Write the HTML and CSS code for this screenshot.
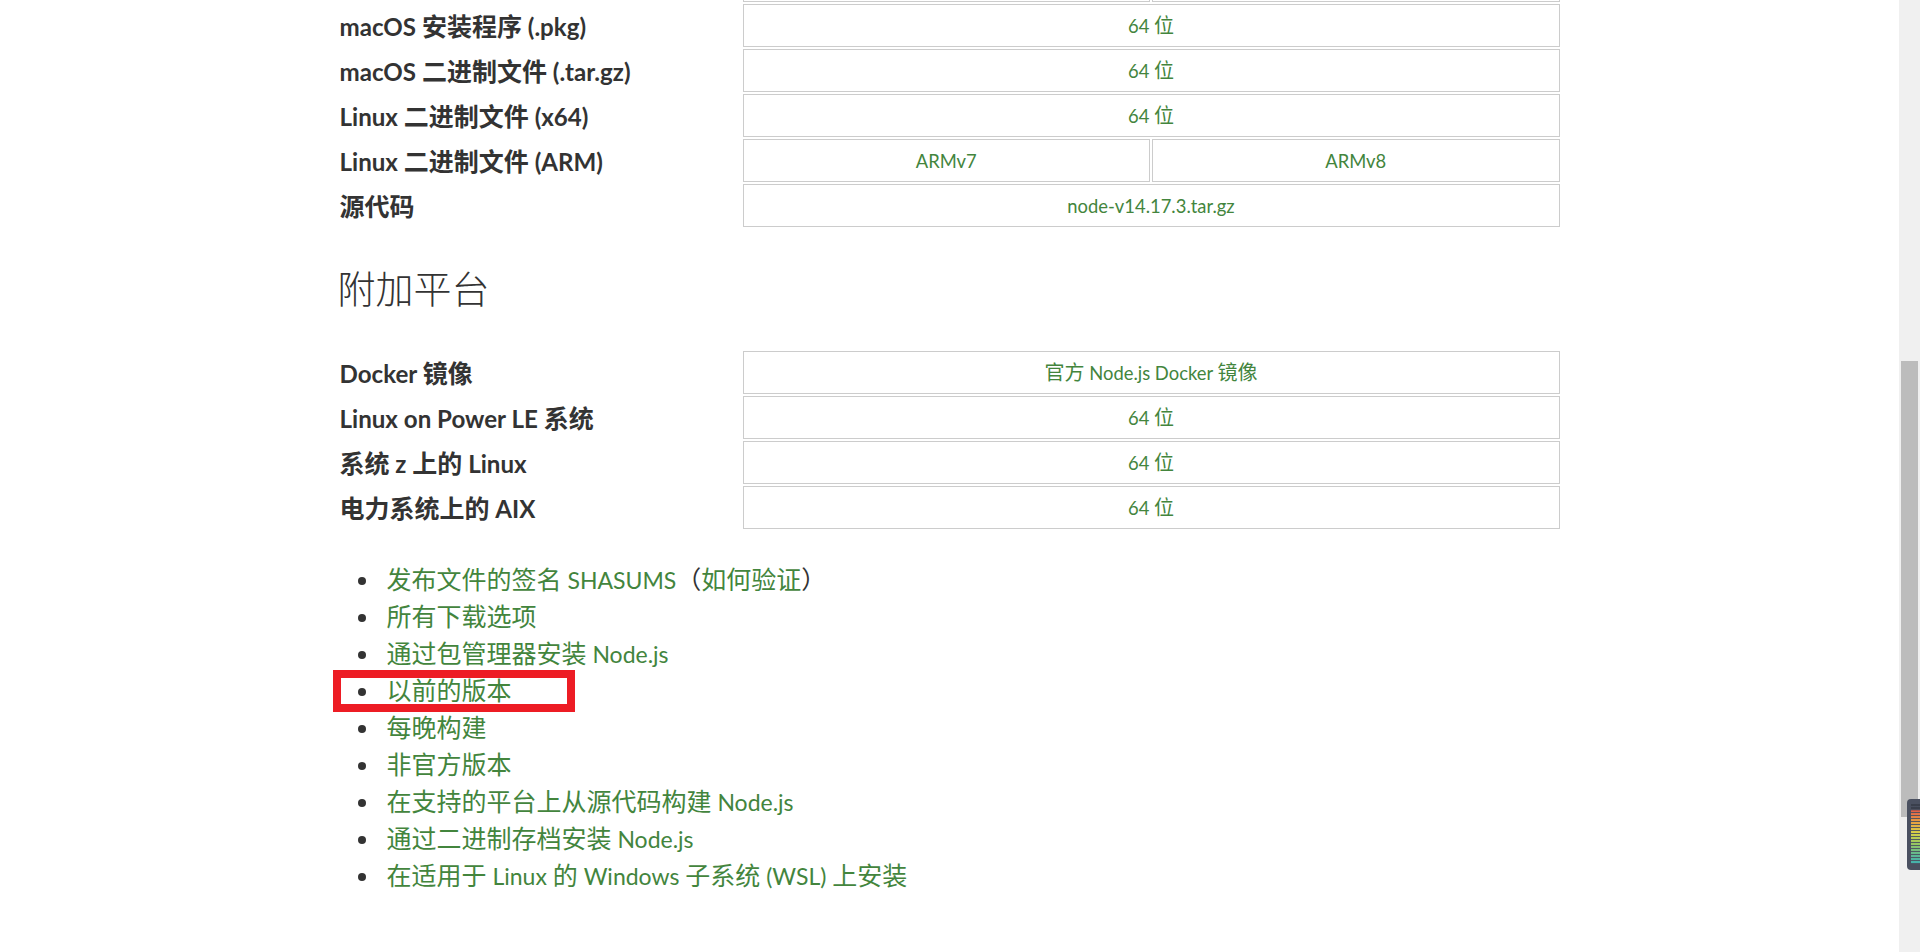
FILE: index.html
```html
<!DOCTYPE html>
<html lang="zh-CN">
<head>
<meta charset="utf-8">
<title>下载 | Node.js</title>
<link rel="stylesheet" href="styles.css">
</head>
<body>
<div class="page">
  <main class="viewport">
    <div class="container">
      <table class="download-matrix matrix-main">
        <colgroup><col class="col-label"><col><col></colgroup>
        <tbody>
          <tr class="offscreen-row"><th></th><td></td><td></td></tr>
          <tr><th><span class="l">macOS </span>安装程序<span class="l"> (.pkg)</span></th><td colspan="2"><a href="#"><span class="l">64 </span>位</a></td></tr>
          <tr><th><span class="l">macOS </span>二进制文件<span class="l"> (.tar.gz)</span></th><td colspan="2"><a href="#"><span class="l">64 </span>位</a></td></tr>
          <tr><th><span class="l">Linux </span>二进制文件<span class="l"> (x64)</span></th><td colspan="2"><a href="#"><span class="l">64 </span>位</a></td></tr>
          <tr><th><span class="l">Linux </span>二进制文件<span class="l"> (ARM)</span></th><td><a href="#"><span class="l">ARMv7</span></a></td><td><a href="#"><span class="l">ARMv8</span></a></td></tr>
          <tr><th>源代码</th><td colspan="2"><a href="#"><span class="l">node-v14.17.3.tar.gz</span></a></td></tr>
        </tbody>
      </table>

      <h2 class="section-title">附加平台</h2>

      <table class="download-matrix">
        <colgroup><col class="col-label"><col><col></colgroup>
        <tbody>
          <tr><th><span class="l">Docker </span>镜像</th><td colspan="2"><a href="#">官方<span class="l"> Node.js Docker </span>镜像</a></td></tr>
          <tr><th><span class="l">Linux on Power LE </span>系统</th><td colspan="2"><a href="#"><span class="l">64 </span>位</a></td></tr>
          <tr><th>系统<span class="l"> z </span>上的<span class="l"> Linux</span></th><td colspan="2"><a href="#"><span class="l">64 </span>位</a></td></tr>
          <tr><th>电力系统上的<span class="l"> AIX</span></th><td colspan="2"><a href="#"><span class="l">64 </span>位</a></td></tr>
        </tbody>
      </table>

      <ul class="link-list">
        <li><span><a href="#">发布文件的签名<span class="l"> SHASUMS</span></a>（<a href="#">如何验证</a>）</span></li>
        <li><span><a href="#">所有下载选项</a></span></li>
        <li><span><a href="#">通过包管理器安装<span class="l"> Node.js</span></a></span></li>
        <li><span><a href="#">以前的版本</a></span></li>
        <li><span><a href="#">每晚构建</a></span></li>
        <li><span><a href="#">非官方版本</a></span></li>
        <li><span><a href="#">在支持的平台上从源代码构建<span class="l"> Node.js</span></a></span></li>
        <li><span><a href="#">通过二进制存档安装<span class="l"> Node.js</span></a></span></li>
        <li><span><a href="#">在适用于<span class="l"> Linux </span>的<span class="l"> Windows </span>子系统<span class="l"> (WSL) </span>上安装</a></span></li>
      </ul>
    </div>
  </main>
  <div class="scrollbar"><div class="scroll-thumb"></div></div>
</div>
<div class="annotation-box"></div>
<div class="meter-widget"><div class="meter-bars"></div></div>
</body>
</html>
```

FILE: styles.css
```css
html, body {
  margin: 0;
  padding: 0;
  height: 100%;
  overflow: hidden;
  background: #ffffff;
}

body {
  font-family: Lato, "Noto Sans CJK SC", sans-serif;
  color: #333333;
}

.l {
  font-size: 0.92em;
  line-height: 1;
}

.page {
  display: flex;
  height: 952px;
}

.viewport {
  flex: 1;
  min-width: 0;
  overflow: hidden;
}

.container {
  width: 1224px;
  margin: -43px auto 0;
}

a {
  color: #43853d;
  text-decoration: none;
}

.download-matrix {
  width: 100%;
  table-layout: fixed;
  border-collapse: separate;
  border-spacing: 2px;
}

.col-label {
  width: 401px;
}

.download-matrix th {
  text-align: left;
  font-size: 25px;
  font-weight: 700;
  line-height: 30px;
  color: #333333;
  padding: 0;
  height: 43px;
  white-space: nowrap;
}

.download-matrix th .l {
  font-size: 0.965em;
}

.download-matrix td {
  border: 1px solid #cccccc;
  height: 41px;
  padding: 0;
  text-align: center;
  font-size: 20px;
  line-height: 41px;
}

.section-title {
  font-family: "Noto Sans CJK SC", sans-serif;
  font-size: 38px;
  font-weight: 300;
  line-height: 46px;
  margin: 35px 0 39px;
  color: #333333;
}

.link-list {
  list-style: none;
  margin: 30px 0 0;
  padding: 0;
}

.link-list li {
  display: flex;
  align-items: center;
  font-size: 25px;
  line-height: 37px;
  height: 37px;
}

.link-list li::before {
  content: "";
  flex: none;
  width: 8px;
  height: 8px;
  border-radius: 50%;
  background: #333333;
  margin: 2px 21px 0 20px;
}

.scrollbar {
  flex: none;
  width: 21px;
  background: #f0f0f0;
  display: flex;
  flex-direction: column;
  align-items: center;
  padding-top: 361px;
  box-sizing: border-box;
}

.scroll-thumb {
  width: 17px;
  height: 456px;
  background: #bcbcbc;
}

.annotation-box {
  position: absolute;
  left: 333px;
  top: 670px;
  width: 242px;
  height: 42px;
  box-sizing: border-box;
  border: 8px solid #ed1c24;
}

.meter-widget {
  position: absolute;
  left: 1907px;
  top: 799px;
  width: 13px;
  height: 71px;
  box-sizing: border-box;
  background: #4a5060;
  border-radius: 4px 0 0 4px;
  padding: 5px 0 6px 4px;
}

.meter-bars {
  width: 9px;
  height: 100%;
  background:
    repeating-linear-gradient(to bottom, transparent 0 2px, rgba(74,80,96,0.9) 2px 3px),
    linear-gradient(to bottom, #3a3f4c 0%, #3a3f4c 8%, #e0604a 12%, #e8a040 30%, #d8d048 48%, #98c860 66%, #60b890 84%, #40b0b0 100%);
}
```
